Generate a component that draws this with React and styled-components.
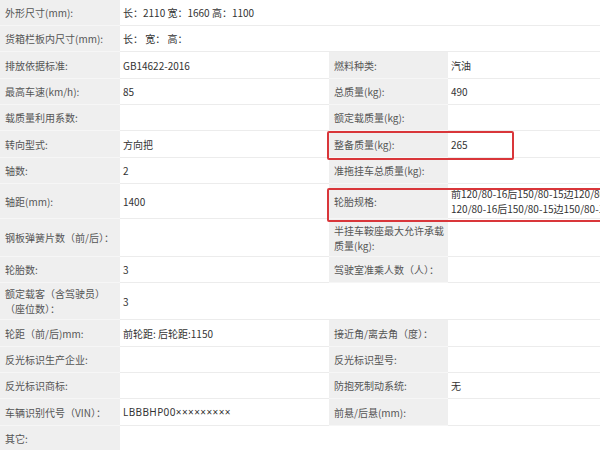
import React from "react";
import styled, { createGlobalStyle } from "styled-components";

const GlobalStyle = createGlobalStyle`
  html, body {
    margin: 0;
    padding: 0;
    background: #fff;
    overflow: hidden;
  }
  body {
    font-family: "Noto Sans CJK SC", "Noto Sans", sans-serif;
  }
`;

// The spec sheet is wider than the window; its right edge is cut off.
const Sheet = styled.div`
  position: relative;
  width: 600px;
  height: 450px;
  overflow: hidden;
`;

const Row = styled.div`
  display: grid;
  grid-template-columns: 120px 209px 119px 200px;
  height: ${(p) => p.$h}px;
`;

const Cell = styled.div`
  display: flex;
  align-items: center;
  box-sizing: border-box;
  font-size: 10px;
  line-height: 15px;
`;

const Label = styled(Cell)`
  background: #efefef;
  color: #555;
  padding: 0 2px 0 5px;
  border-bottom: 1px solid #f6f6f6;
`;

const Value = styled(Cell)`
  background: #fff;
  color: #333;
  padding: 0 4px 0 3px;
  border-bottom: 1px solid #ececec;
  grid-column: span ${(p) => p.$span || 1};
  white-space: ${(p) => (p.$nowrap ? "nowrap" : "normal")};
`;

// VIN is set in a Latin face so the masking crosses stay narrow.
const Vin = styled.span`
  font-family: "Noto Sans", sans-serif;
  letter-spacing: 0.4px;
`;

// Red marker boxes drawn over the table.
const Marker = styled.div`
  position: absolute;
  left: ${(p) => p.$x}px;
  top: ${(p) => p.$y}px;
  width: ${(p) => p.$w}px;
  height: ${(p) => p.$hh}px;
  border: 2px solid #d9363a;
  border-radius: 2px;
  box-sizing: border-box;
  pointer-events: none;
`;

const rows = [
  { h: 26, full: true, l: "外形尺寸(mm):", v: "长：2110 宽：1660 高：1100" },
  { h: 26, full: true, l: "货箱栏板内尺寸(mm):", v: "长：  宽：  高：" },
  { h: 27, l: "排放依据标准:", v: "GB14622-2016", rl: "燃料种类:", rv: "汽油" },
  { h: 26, l: "最高车速(km/h):", v: "85", rl: "总质量(kg):", rv: "490" },
  { h: 26, l: "载质量利用系数:", v: "", rl: "额定载质量(kg):", rv: "" },
  { h: 27, l: "转向型式:", v: "方向把", rl: "整备质量(kg):", rv: "265" },
  { h: 26, l: "轴数:", v: "2", rl: "准拖挂车总质量(kg):", rv: "" },
  {
    h: 35,
    l: "轴距(mm):",
    v: "1400",
    rl: "轮胎规格:",
    rv: ["前120/80-16后150/80-15边120/80-12；前", "120/80-16后150/80-15边150/80-12"],
  },
  { h: 38, l: "钢板弹簧片数（前/后）：", v: "", rl: "半挂车鞍座最大允许承载质量(kg):", rv: "" },
  { h: 26, l: "轮胎数:", v: "3", rl: "驾驶室准乘人数（人）：", rv: "" },
  { h: 37, full: true, l: "额定载客（含驾驶员）（座位数）：", v: "3" },
  { h: 27, l: "轮距（前/后)mm:", v: "前轮距: 后轮距:1150", rl: "接近角/离去角（度）：", rv: "" },
  { h: 26, l: "反光标识生产企业:", v: "", rl: "反光标识型号:", rv: "" },
  { h: 26, l: "反光标识商标:", v: "", rl: "防抱死制动系统:", rv: "无" },
  {
    h: 27,
    l: "车辆识别代号（VIN）：",
    v: <Vin>LBBBHP00×××××××××</Vin>,
    rl: "前悬/后悬(mm):",
    rv: "",
  },
  { h: 26, full: true, l: "其它:", v: "" },
];

const App = () => (
  <>
    <GlobalStyle />
    <Sheet>
      {rows.map((r, i) => (
        <Row key={i} $h={r.h}>
          <Label>{r.l}</Label>
          {r.full ? (
            <Value $span={3}>{r.v}</Value>
          ) : (
            <>
              <Value>{r.v}</Value>
              <Label>{r.rl}</Label>
              {Array.isArray(r.rv) ? (
                <Value $nowrap>
                  <span>
                    {r.rv[0]}
                    <br />
                    {r.rv[1]}
                  </span>
                </Value>
              ) : (
                <Value>{r.rv}</Value>
              )}
            </>
          )}
        </Row>
      ))}
      <Marker $x={327} $y={131} $w={187} $hh={29} />
      <Marker $x={327} $y={188} $w={290} $hh={34} />
    </Sheet>
  </>
);

export default App;
